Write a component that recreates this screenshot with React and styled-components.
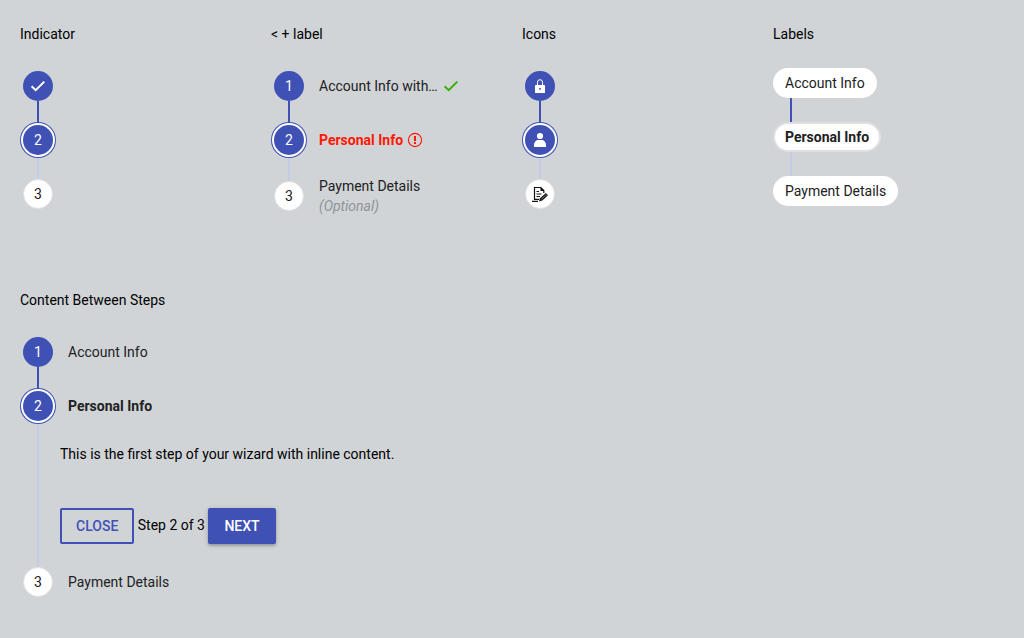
import React from "react";
import styled, { createGlobalStyle, css } from "styled-components";

const blue = "#3f51b5";
const lavender = "#c5cae9";
const border = "#e0e0e0";
const red = "#ff1803";
const green = "#38b000";

const GlobalStyle = createGlobalStyle`
  *, *::before, *::after { box-sizing: border-box; }
  body {
    margin: 0;
    background: #d0d4d7;
    color: #000;
    font: 400 14px/20px Roboto, "Liberation Sans", sans-serif;
  }
`;

const Page = styled.main`
  display: flex;
  flex-direction: column;
  gap: 65px;
  padding: 24px 0 24px 20px;
`;

const Columns = styled.div`
  display: grid;
  grid-template-columns: repeat(4, minmax(0, 1fr));
`;

const Heading = styled.h2`
  margin: 0;
  font-size: 14px;
  line-height: 20px;
  font-weight: 400;
`;

const Steps = styled.ol`
  list-style: none;
  margin: ${(p) => (p.$pills ? 12 : 15)}px 0 0;
  padding: 0;
`;

const Step = styled.li`
  display: grid;
  grid-template-columns: 36px minmax(0, 1fr);
  column-gap: 12px;
`;

const PillStep = styled.li`
  display: flex;
  flex-direction: column;
  align-items: flex-start;
`;

const Rail = styled.div`
  display: flex;
  flex-direction: column;
  align-items: center;
`;

const Line = styled.span`
  flex: 1 0 12px;
  width: 2px;
  margin-left: ${(p) => (p.$inset ? 17 : 0)}px;
  background: ${(p) => p.$color || "transparent"};
`;

const Circle = styled.span`
  position: relative;
  display: grid;
  place-items: center;
  width: 30px;
  height: 30px;
  border-radius: 50%;
  color: #fff;
  background: ${blue};
  ${(p) =>
    p.$state === "current" &&
    css`
      box-shadow: 0 0 0 2px #fff, 0 0 0 3px ${blue};
    `}
  ${(p) =>
    p.$state === "pending" &&
    css`
      color: #212121;
      background: #fff;
      border: 1px solid ${border};
    `}
`;

const Pill = styled.span`
  position: relative;
  height: 30px;
  padding: 0 10px;
  border: 2px solid ${(p) => (p.$current ? border : "#fff")};
  border-radius: 15px;
  line-height: 26px;
  font-weight: ${(p) => (p.$current ? 700 : 400)};
  color: #212121;
  background: #fff;
`;

const Label = styled.div`
  align-self: center;
  padding: 9px 0;
  color: ${(p) => (p.$error ? red : "#212121")};
  font-weight: ${(p) => (p.$current ? 700 : 400)};
`;

const LabelRow = styled.div`
  display: flex;
  align-items: center;
  gap: 4px;
`;

const LabelText = styled.span`
  max-width: 120px;
  overflow: hidden;
  text-overflow: ellipsis;
  white-space: nowrap;
`;

const Optional = styled.em`
  display: block;
  color: #909395;
`;

const Panel = styled.li`
  display: grid;
  grid-template-columns: 36px minmax(0, 1fr);
  column-gap: 4px;
`;

const PanelBody = styled.div`
  padding: 11px 0;
`;

const Text = styled.p`
  margin: 0 0 44px;
`;

const Actions = styled.div`
  line-height: 34px;
`;

const Button = styled.button`
  height: 36px;
  vertical-align: top;
  padding: 0 14px;
  border: 2px solid ${blue};
  border-radius: 2px;
  font: 500 14px/20px Roboto, "Liberation Sans", sans-serif;
  text-transform: uppercase;
  cursor: pointer;
  color: ${(p) => (p.$filled ? "#fff" : blue)};
  background: ${(p) => (p.$filled ? blue : "transparent")};
  box-shadow: ${(p) =>
    p.$filled ? "0 1px 5px rgba(0,0,0,.2), 0 2px 2px rgba(0,0,0,.14)" : "none"};
`;

const Svg = styled.svg`
  display: block;
  flex: none;
`;

const CheckIcon = ({ color = "#fff", size = 16 }) => (
  <Svg width={size} height={size} viewBox="0 0 16 16" fill="none" stroke={color} strokeWidth="2" aria-hidden="true">
    <path d="M1.6 8.2 5.7 12.2 14.3 3.6" />
  </Svg>
);

const AlertIcon = () => (
  <Svg width="16" height="16" viewBox="0 0 16 16" role="img" aria-label="Error">
    <circle cx="8" cy="8" r="6.6" fill="none" stroke={red} strokeWidth="1.1" />
    <path d="M7 4h2v5H7zM7 10h2v2H7z" fill={red} />
  </Svg>
);

const LockIcon = () => (
  <Svg width="16" height="16" viewBox="0 0 16 16" aria-hidden="true">
    <path d="M5.5 7.5V4.200a2.500 2.500 0 0 1 5 0v3.300" fill="none" stroke="#fff" strokeWidth="1" />
    <path fillRule="evenodd" fill="#fff" d="M3.500 7h9q.5 0 .5.500v7q0 .5-.5.500h-9q-.5 0-.5-.500v-7q0-.5.5-.500zM7.200 10v1.800h1.600v-1.800z" />
  </Svg>
);

const PersonIcon = () => (
  <Svg width="16" height="16" viewBox="0 0 16 16" fill="#fff" aria-hidden="true">
    <circle cx="8" cy="4" r="3.1" />
    <path d="M2 15v-1.800C2 10 4.200 8 6.500 8h3c2.300 0 4.500 2 4.500 5.200V15z" />
  </Svg>
);

const SignIcon = () => (
  <Svg width="16" height="16" viewBox="0 0 16 16" fill="none" stroke="#111" strokeWidth="1.2" aria-hidden="true">
    <path d="M7 13.400H2.500V1.500h6.300l3 3v2.500M0 15.400h6" />
    <path d="M8.500 1v4h3.900z" fill="#111" stroke="none" />
    <path d="M4.500 5.500h2.500M4.500 8h5M4.500 10.500h3.500" />
    <path d="M7 15.500 8 12.300 13.800 7 16 9.200 10.300 14.500z" fill="#111" stroke="none" />
    <path d="M9.400 13.200 12.900 9.900M13 8.400l1.600 1.600" stroke="#fff" strokeWidth=".5" />
  </Svg>
);

const states = ["done", "current", "pending"];
const lineColors = [null, blue, lavender, null];

function StepRow({ index, marker, children }) {
  return (
    <Step aria-current={index === 1 ? "step" : undefined}>
      <Rail>
        <Line $color={lineColors[index]} />
        <Circle $state={states[index]}>{marker}</Circle>
        <Line $color={lineColors[index + 1]} />
      </Rail>
      {children}
    </Step>
  );
}

function IndicatorSteps({ markers }) {
  return (
    <Steps>
      {markers.map((marker, i) => (
        <StepRow key={i} index={i} marker={marker} />
      ))}
    </Steps>
  );
}

export default function App() {
  return (
    <>
      <GlobalStyle />
      <Page>
        <Columns>
          <section>
            <Heading>Indicator</Heading>
            <IndicatorSteps markers={[<CheckIcon />, "2", "3"]} />
          </section>

          <section>
            <Heading>{"< + label"}</Heading>
            <Steps>
              <StepRow index={0} marker="1">
                <Label>
                  <LabelRow>
                    <LabelText>Account Info with long label</LabelText>
                    <CheckIcon color={green} />
                  </LabelRow>
                </Label>
              </StepRow>
              <StepRow index={1} marker="2">
                <Label $current $error>
                  <LabelRow>
                    <LabelText>Personal Info</LabelText>
                    <AlertIcon />
                  </LabelRow>
                </Label>
              </StepRow>
              <StepRow index={2} marker="3">
                <Label>
                  Payment Details
                  <Optional>(Optional)</Optional>
                </Label>
              </StepRow>
            </Steps>
          </section>

          <section>
            <Heading>Icons</Heading>
            <IndicatorSteps markers={[<LockIcon />, <PersonIcon />, <SignIcon />]} />
          </section>

          <section>
            <Heading>Labels</Heading>
            <Steps $pills>
              {["Account Info", "Personal Info", "Payment Details"].map((name, i) => (
                <PillStep key={name} aria-current={i === 1 ? "step" : undefined}>
                  <Line $inset $color={lineColors[i]} />
                  <Pill $current={i === 1}>{name}</Pill>
                  <Line $inset $color={lineColors[i + 1]} />
                </PillStep>
              ))}
            </Steps>
          </section>
        </Columns>

        <section>
          <Heading>Content Between Steps</Heading>
          <Steps>
            <StepRow index={0} marker="1">
              <Label>Account Info</Label>
            </StepRow>
            <StepRow index={1} marker="2">
              <Label $current>Personal Info</Label>
            </StepRow>
            <Panel>
              <Rail>
                <Line $color={lavender} />
              </Rail>
              <PanelBody>
                <Text>This is the first step of your wizard with inline content.</Text>
                <Actions>
                  <Button type="button">Close</Button>
                  {" Step 2 of 3 "}
                  <Button type="button" $filled>Next</Button>
                </Actions>
              </PanelBody>
            </Panel>
            <StepRow index={2} marker="3">
              <Label>Payment Details</Label>
            </StepRow>
          </Steps>
        </section>
      </Page>
    </>
  );
}
